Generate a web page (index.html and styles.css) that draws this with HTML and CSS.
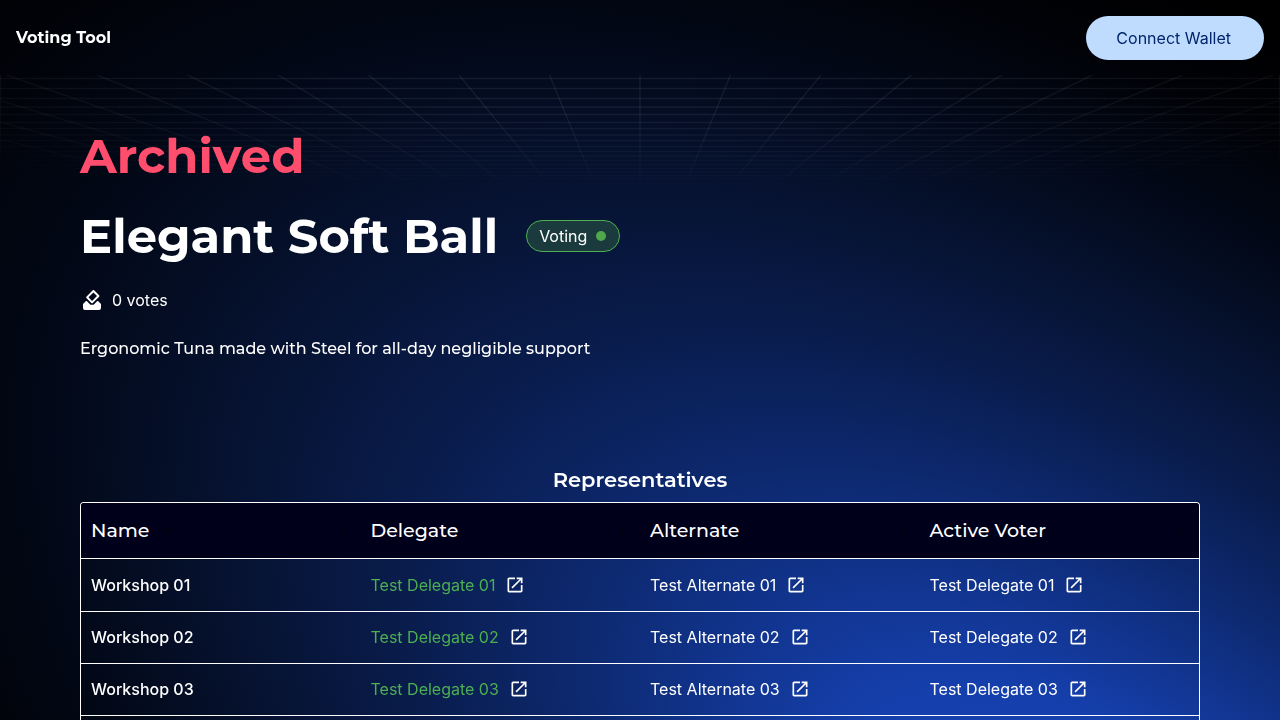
FILE: index.html
```html
<!DOCTYPE html>
<html lang="en">
<head>
<meta charset="utf-8">
<meta name="viewport" content="width=device-width, initial-scale=1">
<title>Voting Tool</title>
<link rel="stylesheet" href="styles.css">
</head>
<body>
<svg class="backdrop" viewBox="0 0 1280 720" preserveAspectRatio="none" aria-hidden="true">
  <defs>
    <radialGradient id="glow" gradientUnits="userSpaceOnUse" cx="0" cy="0" r="1" gradientTransform="translate(1100 890) rotate(34) scale(1580 840)">
      <stop offset="0" stop-color="#1746bc"/>
      <stop offset="0.18" stop-color="#153fac"/>
      <stop offset="0.37" stop-color="#0d2970"/>
      <stop offset="0.5" stop-color="#091c4c"/>
      <stop offset="0.63" stop-color="#061230"/>
      <stop offset="0.76" stop-color="#020817"/>
      <stop offset="0.88" stop-color="#010207"/>
      <stop offset="1" stop-color="#000"/>
    </radialGradient>
  </defs>
  <rect width="1280" height="720" fill="url(#glow)"/>
</svg>
<header class="topbar">
  <a class="brand" href="#">Voting Tool</a>
  <button class="connect" type="button">Connect Wallet</button>
</header>
<main class="main">
  <svg class="grid" viewBox="0 0 1280 120" preserveAspectRatio="none" aria-hidden="true">
    <defs>
      <radialGradient id="fade" gradientUnits="userSpaceOnUse" cx="0" cy="0" r="1" gradientTransform="translate(640 0) scale(1100 120)">
        <stop offset="0.3" stop-color="#fff"/>
        <stop offset="1" stop-color="#000"/>
      </radialGradient>
      <mask id="gridmask"><rect width="1280" height="120" fill="url(#fade)"/></mask>
    </defs>
    <g mask="url(#gridmask)" stroke="#fff" stroke-opacity="0.07" stroke-width="1.4" fill="none">
      <path d="M0 3.5H1280M0 13.5H1280M0 23.5H1280M0 32H1280M0 39.5H1280M0 47.500H1280M0 53.500H1280M0 60H1280M0 65.500H1280M0 71.500H1280M0 76.500H1280M0 81H1280M0 85.500H1280M0 89.500H1280M0 93.500H1280M0 97H1280M0 100.500H1280M0 103.500H1280"/>
      <path d="M640 0V120M730.500 0L681 120M821 0L722 120M911.500 0L763 120M1002 0L804 120M1092.500 0L845 120M1183 0L886 120M1273.500 0L927 120M1364 0L968 120M1454.500 0L1009 120M1545 0L1050 120M549.500 0L599 120M459 0L558 120M368.500 0L517 120M278 0L476 120M187.500 0L435 120M97 0L394 120M6.500 0L353 120M-84 0L312 120M-174.500 0L271 120M-265 0L230 120M.5 0V120M1279.500 0V120"/>
    </g>
  </svg>
  <section class="intro">
    <p class="archived">Archived</p>
    <div class="title-row">
      <h1 class="title">Elegant Soft Ball</h1>
      <span class="chip">Voting<span class="dot"></span></span>
    </div>
    <div class="votes">
      <svg class="vote-icon" viewBox="0 0 24 24" aria-hidden="true"><path d="M18 13h-.68l-3.700 3.700h-3.200L6.730 13H6l-3 3v4c0 1.100.89 2 1.990 2H19c1.100 0 2-.89 2-2v-4l-3-3zm-1-5.050-4.950 4.950-3.540-3.540 4.950-4.950L17 7.950zm-4.240-5.660L6.390 8.660c-.39.39-.39 1.020 0 1.410l4.950 4.950c.39.39 1.020.39 1.410 0l6.360-6.360c.39-.39.39-1.020 0-1.410L14.160 2.300c-.38-.4-1.010-.4-1.400-.01z"/></svg>
      <span>0 votes</span>
    </div>
    <p class="summary">Ergonomic Tuna made with Steel for all-day negligible support</p>
  </section>
  <section class="reps">
    <h2 class="reps-title" id="reps-title">Representatives</h2>
    <div class="frame">
      <table class="table" aria-labelledby="reps-title">
        <thead>
          <tr>
            <th scope="col">
              <div class="head">Name
                <svg class="head-icon" viewBox="0 0 24 24" aria-hidden="true"><path d="M4 12l1.410 1.410L11 7.830V20h2V7.830l5.580 5.590L20 12l-8-8-8 8z"/></svg>
                <svg class="head-icon more" viewBox="0 0 24 24" aria-hidden="true"><circle cx="12" cy="6" r="2"/><circle cx="12" cy="12" r="2"/><circle cx="12" cy="18" r="2"/></svg>
              </div>
            </th>
            <th scope="col"><div class="head">Delegate<svg class="head-icon more" viewBox="0 0 24 24" aria-hidden="true"><circle cx="12" cy="6" r="2"/><circle cx="12" cy="12" r="2"/><circle cx="12" cy="18" r="2"/></svg></div></th>
            <th scope="col"><div class="head">Alternate<svg class="head-icon more" viewBox="0 0 24 24" aria-hidden="true"><circle cx="12" cy="6" r="2"/><circle cx="12" cy="12" r="2"/><circle cx="12" cy="18" r="2"/></svg></div></th>
            <th scope="col"><div class="head">Active Voter<svg class="head-icon more" viewBox="0 0 24 24" aria-hidden="true"><circle cx="12" cy="6" r="2"/><circle cx="12" cy="12" r="2"/><circle cx="12" cy="18" r="2"/></svg></div></th>
          </tr>
        </thead>
        <tbody id="rows"></tbody>
      </table>
    </div>
  </section>
</main>
<script src="rows.js"></script>
</body>
</html>
```
FILE: rows.js
```js
const icon = '<svg class="open-icon" viewBox="0 0 24 24" aria-hidden="true"><path d="M19 19H5V5h7V3H5c-1.110 0-2 .9-2 2v14c0 1.100.89 2 2 2h14c1.100 0 2-.9 2-2v-7h-2v7zM14 3v2h3.590l-9.830 9.830 1.410 1.410L19 6.410V10h2V3h-7z"/></svg>';
const person = (name, n, cls) =>
  `<td><span class="person ${cls}">${name} ${n}<a href="#" aria-label="Open ${name} ${n}">${icon}</a></span></td>`;
document.getElementById('rows').innerHTML = ['01', '02', '03'].map(n =>
  `<tr><td class="name">Workshop ${n}</td>${person('Test Delegate', n, 'active')}${person('Test Alternate', n, '')}${person('Test Delegate', n, '')}</tr>`
).join('');
```
FILE: styles.css
```css
* { box-sizing: border-box; }
body {
  display: flex;
  flex-direction: column;
  min-height: 100vh;
  margin: 0;
  background: #000;
  color: #fff;
  font: 16px/24px Inter, sans-serif;
}
h1, h2, p { margin: 0; }
.backdrop {
  position: fixed;
  inset: 0;
  z-index: -1;
  width: 100%;
  height: 100%;
}
.topbar {
  display: flex;
  align-items: center;
  justify-content: space-between;
  padding: 16px 16px 15px;
}
.brand {
  color: #fff;
  text-decoration: none;
  font: 700 16px/24px Montserrat, Inter, sans-serif;
}
.connect {
  border: 0;
  border-radius: 22px;
  padding: 10px 33px 10px 30px;
  background: #bfdcff;
  color: #03256c;
  font: 400 16px/24px Inter, sans-serif;
  cursor: pointer;
}
.main {
  position: relative;
  display: flex;
  flex-direction: column;
  flex: 1;
  padding: 49px 80px 0;
}
.grid {
  position: absolute;
  top: 0;
  left: 0;
  z-index: -1;
  width: 100%;
  height: 120px;
}
.archived, .title { font: 700 48px/64px Montserrat, Inter, sans-serif; }
.archived { color: #ff4d6d; margin-bottom: 16px; }
.title-row { display: flex; align-items: center; gap: 28px; }
.chip {
  display: flex;
  align-items: center;
  gap: 9px;
  height: 32px;
  padding: 0 13px 0 12px;
  border: 1px solid #4caf50;
  border-radius: 16px;
  background: #1b3a3d;
}
.dot { width: 10px; height: 10px; border-radius: 50%; background: #4fa84a; }
.votes { display: flex; align-items: center; gap: 8px; margin: 20px 0 25px; }
.vote-icon { width: 24px; height: 24px; fill: #fff; }
.summary { font: 500 16px/24px Montserrat, Inter, sans-serif; }
.reps {
  display: flex;
  flex-direction: column;
  flex: 1;
  margin-top: 103px;
}
.reps-title {
  text-align: center;
  font: 600 21px/32px Montserrat, Inter, sans-serif;
  margin-bottom: 6px;
}
.frame {
  flex: 1;
  border: 1px solid #fff;
  border-bottom: 0;
  border-radius: 4px 4px 0 0;
  overflow: hidden;
}
.table { width: 100%; table-layout: fixed; border-collapse: separate; border-spacing: 0; }
.table th {
  height: 56px;
  padding: 0 10px;
  border-bottom: 1px solid #fff;
  background: #00001a;
  text-align: left;
  font: 500 19px/28px Montserrat, Inter, sans-serif;
}
.head { display: flex; align-items: center; gap: 10px; }
.head-icon { width: 16px; height: 16px; fill: #00000f; }
.more { margin-left: auto; }
.table td { height: 52px; padding: 0 10px 1px; border-bottom: 1px solid #fff; }
.table tbody tr:first-child td { height: 53px; }
.name { font-weight: 500; }
.person { display: flex; align-items: center; gap: 10px; }
.person a { display: flex; }
.active { color: #4caf50; }
.open-icon { width: 20px; height: 20px; fill: #fff; }
```
